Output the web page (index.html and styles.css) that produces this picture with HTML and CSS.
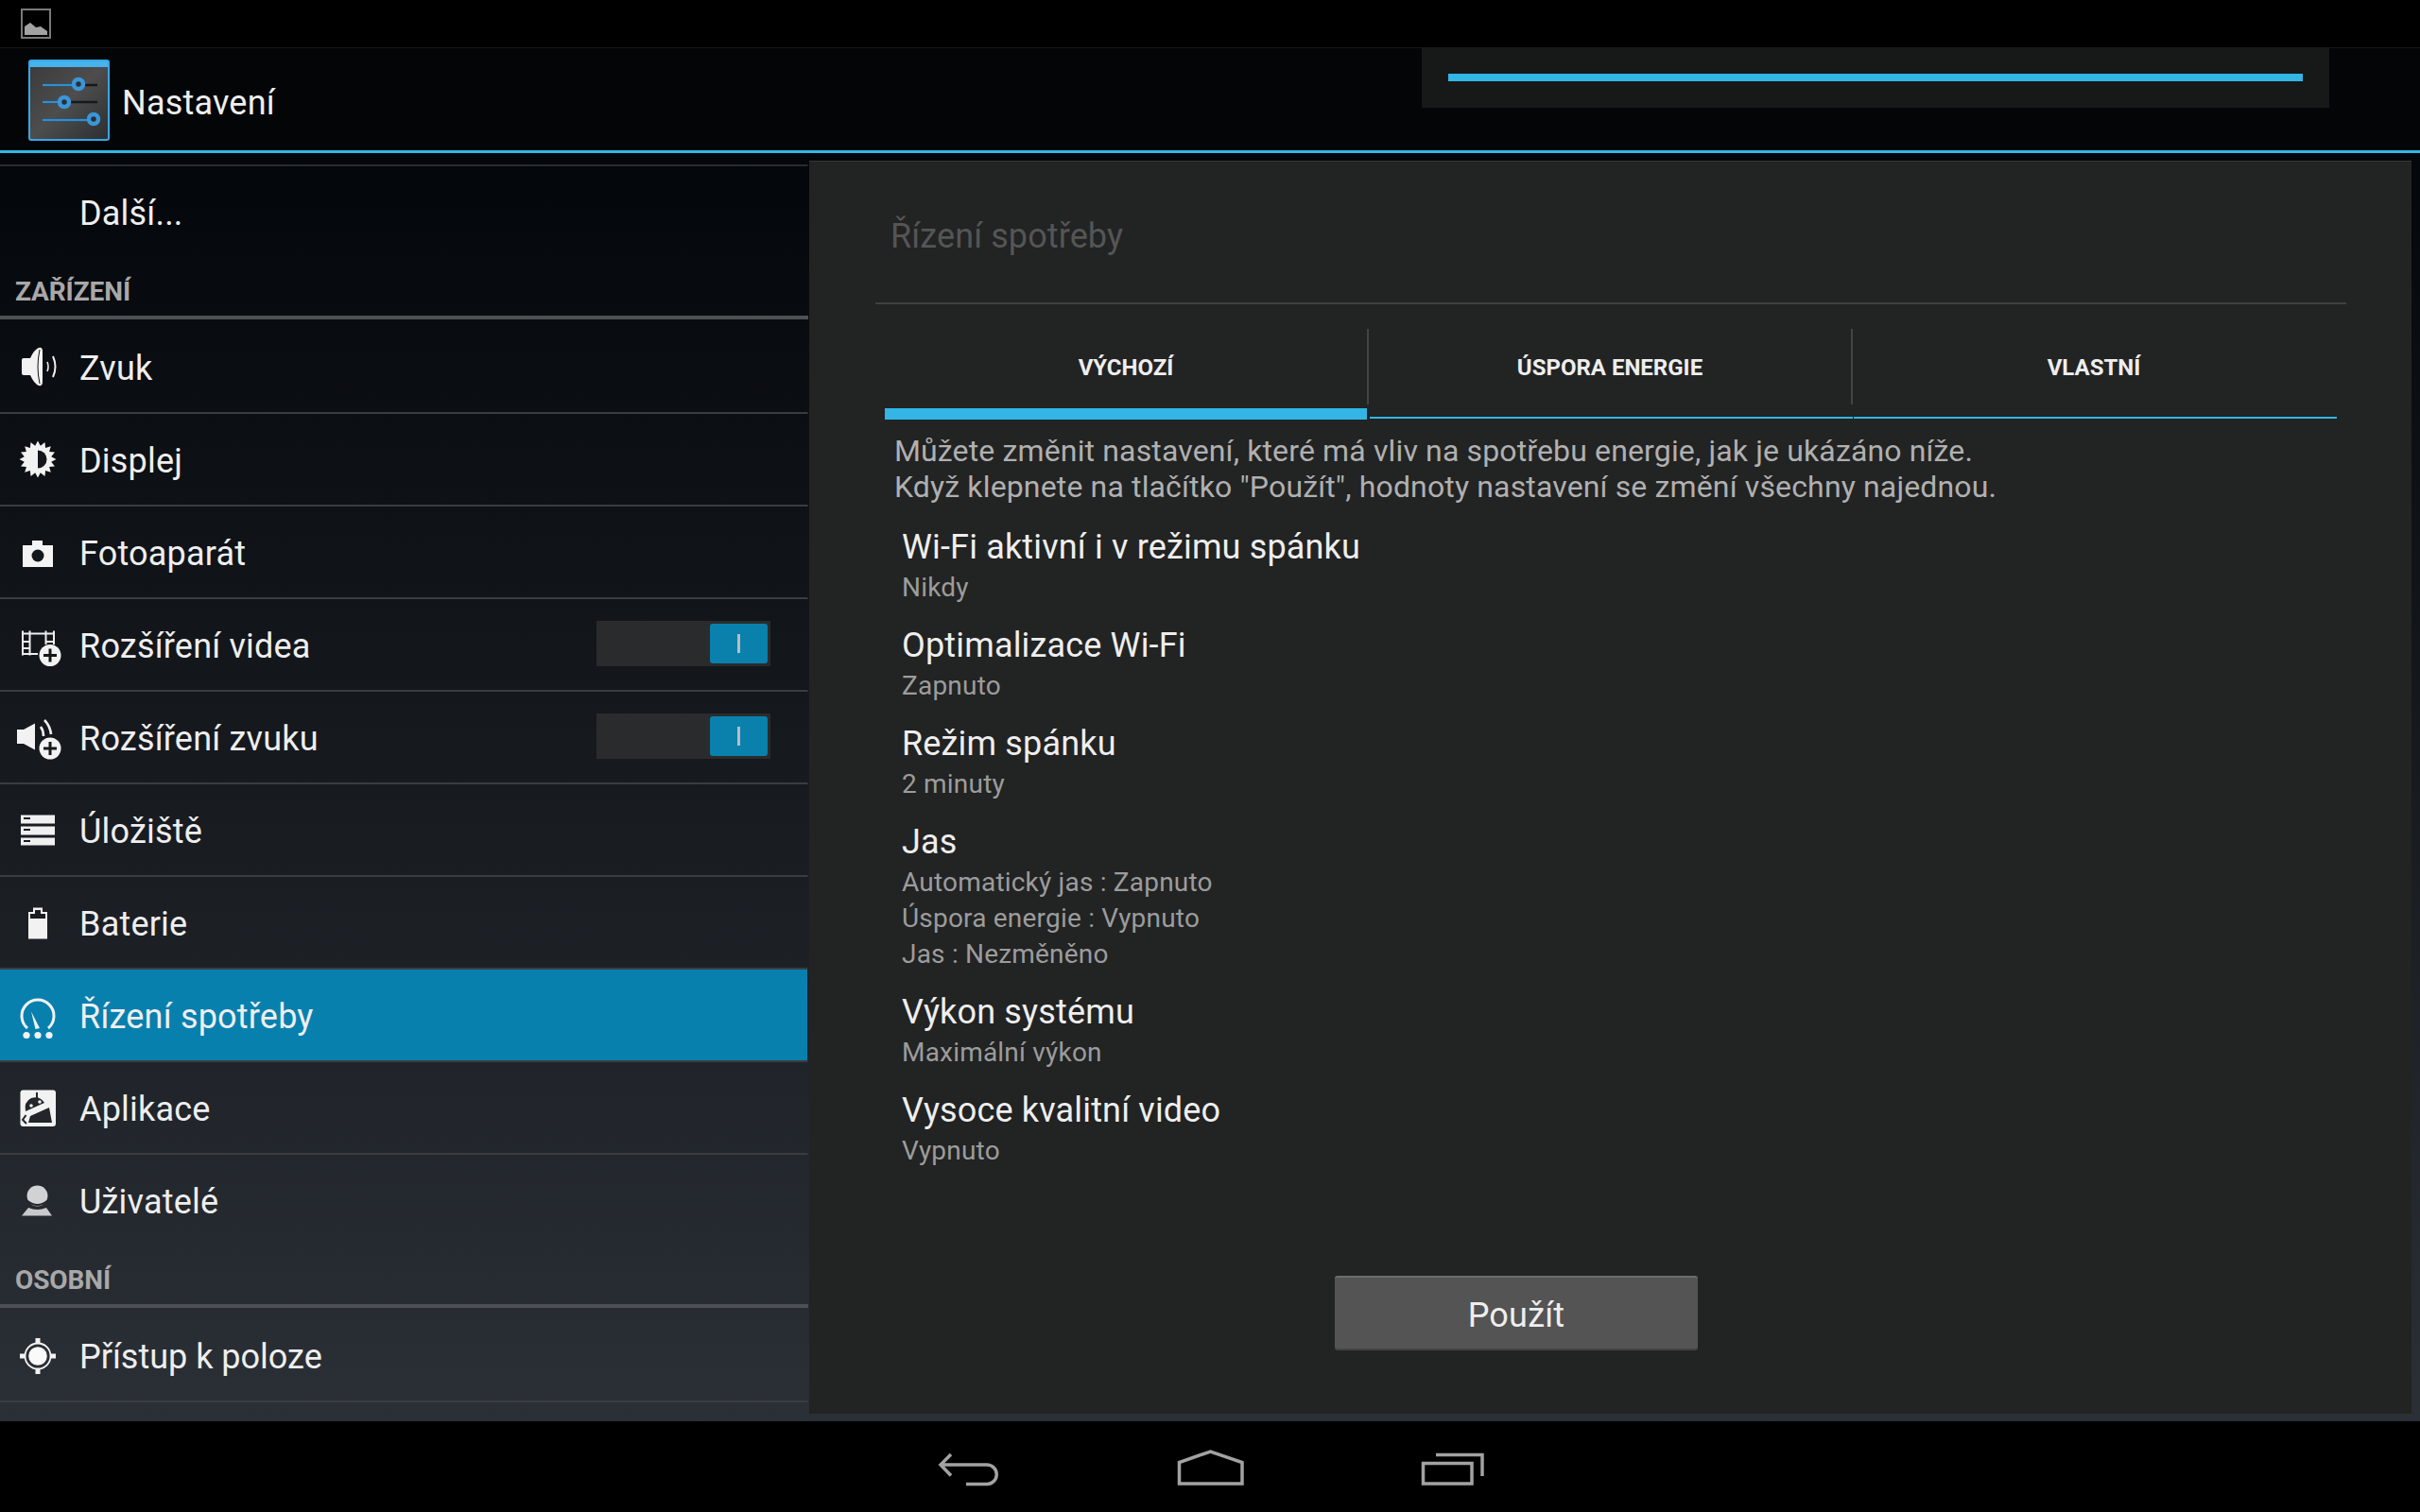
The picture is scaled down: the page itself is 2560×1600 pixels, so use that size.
FILE: index.html
```html
<!DOCTYPE html>
<html lang="cs">
<head>
<meta charset="utf-8">
<title>Nastavení</title>
<link rel="stylesheet" href="styles.css">
</head>
<body>
<div class="app">
  <header class="status">
    <svg class="status-icon" viewBox="0 0 32 32"><rect x="1" y="1" width="30" height="30" fill="none" stroke="#7a7a7a" stroke-width="2"/><path d="M4 28V19L10 15L16 20L21 19L28 24V28Z" fill="#a2a2a2"/></svg>
  </header>
  <div class="action">
    <svg class="app-icon" viewBox="0 0 86 86">
      <defs><linearGradient id="tile" x1="0" y1="0" x2="1" y2="1"><stop offset="0" stop-color="#3a3a3a"/><stop offset="0.5" stop-color="#4d4d4d"/><stop offset="1" stop-color="#2b2e31"/></linearGradient></defs>
      <rect x="1" y="1" width="84" height="84" rx="2" fill="url(#tile)" stroke="#37a7e6" stroke-width="2"/>
      <rect x="2" y="2" width="82" height="6" fill="#48b2ee"/>
      <path d="M15 27H73M15 45H73M15 64H73" stroke="#16181a" stroke-width="2.5"/>
      <path d="M15 27H53M15 45H38M15 64H69" stroke="#2f8fd0" stroke-width="2.5"/>
      <circle cx="53" cy="26" r="5" fill="#2b2e31" stroke="#3a96d8" stroke-width="4.5"/>
      <circle cx="38" cy="45" r="5" fill="#2b2e31" stroke="#3a96d8" stroke-width="4.5"/>
      <circle cx="69" cy="63" r="5" fill="#2b2e31" stroke="#3a96d8" stroke-width="4.5"/>
    </svg>
    <span class="app-title">Nastavení</span>
    <div class="progress-box"><div class="progress-bar"></div></div>
  </div>
  <main class="main">
    <nav class="list">
      <div class="row plain"><span class="label">Další...</span></div>
      <div class="section">ZAŘÍZENÍ</div>
      <div class="row first">
        <svg class="icon" viewBox="0 0 60 60"><path d="M15 21H22Q26 12 31 10Q35 9 35 14V46Q35 51 31 50Q26 48 22 39H15Q13 39 13 37V23Q13 21 15 21Z" fill="#f2f2f2"/><path d="M32 12Q28 30 32 48" fill="none" stroke="#14171a" stroke-width="1"/><path d="M40 25Q42 30 40 35" fill="none" stroke="#eee" stroke-width="1.6"/><path d="M46 19Q51 30 46 41" fill="none" stroke="#eee" stroke-width="2"/></svg>
        <span class="label">Zvuk</span>
      </div>
      <div class="row">
        <svg class="icon" viewBox="0 0 60 60"><polygon points="49.5,30 44.2,32.8 48,37.5 42.1,38.1 43.8,43.8 38.1,42.1 37.5,48 32.8,44.2 30,49.5 27.2,44.2 22.5,48 21.9,42.1 16.2,43.8 17.9,38.1 12,37.5 15.8,32.8 10.5,30 15.8,27.2 12,22.5 17.9,21.9 16.2,16.2 21.9,17.9 22.5,12 27.2,15.8 30,10.5 32.8,15.8 37.5,12 38.1,17.9 43.8,16.2 42.1,21.9 48,22.5 44.2,27.2" fill="#f2f2f2"/><path d="M30 20.5A9.5 9.5 0 0 1 30 39.5Z" fill="#13161a"/></svg>
        <span class="label">Displej</span>
      </div>
      <div class="row">
        <svg class="icon" viewBox="0 0 60 60"><path d="M14 23H24V18H35V23H46V46H14Z" fill="#f4f4f4"/><circle cx="30" cy="34" r="6.5" fill="#15181b"/></svg>
        <span class="label">Fotoaparát</span>
      </div>
      <div class="row">
        <svg class="icon" viewBox="0 0 60 60"><path d="M14 15.5V41.5M21.5 15.5V41.5M38.5 15.5V30M47 15.5V30M14 18.5H47M14 27H21.5M38.5 27H47M14 34H21.5M14 40H30" fill="none" stroke="#eee" stroke-width="2"/><circle cx="43" cy="41.5" r="11.5" fill="#f2f2f2"/><path d="M43 34.5V48.5M36 41.5H50" stroke="#15181b" stroke-width="3"/></svg>
        <span class="label">Rozšíření videa</span>
        <div class="toggle"><div class="thumb"><i class="tick"></i></div></div>
      </div>
      <div class="row">
        <svg class="icon" viewBox="0 0 60 60"><path d="M8 22H15L27 15.5V43.5L15 37H8Z" fill="#f2f2f2"/><path d="M33 19Q36 23 36 29M37 12Q43 18 44 27" fill="none" stroke="#eee" stroke-width="2.6"/><circle cx="43" cy="42" r="11.5" fill="#f2f2f2"/><path d="M43 35V49M36 42H50" stroke="#17191c" stroke-width="3"/></svg>
        <span class="label">Rozšíření zvuku</span>
        <div class="toggle"><div class="thumb"><i class="tick"></i></div></div>
      </div>
      <div class="row">
        <svg class="icon" viewBox="0 0 60 60"><path d="M12 14.5H48V23.5H12ZM12 26.5H48V35.5H12ZM12 38.5H48V46.5H12Z" fill="#f0f0f0"/><path d="M15 18H22M15 30H22M15 42H22" stroke="#1a1d20" stroke-width="2"/></svg>
        <span class="label">Úložiště</span>
      </div>
      <div class="row">
        <svg class="icon" viewBox="0 0 60 60"><path d="M25 14.5H35V19H40V47.5H20V19H25Z" fill="#f2f2f2"/><path d="M27 17H33V21H38V26H22V21H27Z" fill="#1b1e21"/></svg>
        <span class="label">Baterie</span>
      </div>
      <div class="row selected">
        <svg class="icon" viewBox="0 0 60 60"><path d="M19 44A17 17 0 1 1 41 44" fill="none" stroke="#f2f2f2" stroke-width="3"/><polygon points="23,26.5 27.5,45 32,44" fill="#f2f2f2"/><circle cx="18" cy="51.5" r="3.6" fill="#f2f2f2"/><circle cx="30" cy="51.5" r="3.6" fill="#f2f2f2"/><circle cx="42" cy="51.5" r="3.6" fill="#f2f2f2"/></svg>
        <span class="label">Řízení spotřeby</span>
      </div>
      <div class="row">
        <svg class="icon" viewBox="0 0 60 60"><rect x="11.5" y="11.5" width="37.5" height="38.5" rx="3" fill="#f2f2f2"/><path d="M17 34Q15 24 23 20Q32 17 37 25Z" fill="#22252a"/><path d="M29 14V20" stroke="#22252a" stroke-width="2"/><circle cx="23" cy="28" r="1.8" fill="#f2f2f2"/><circle cx="32" cy="24" r="1.8" fill="#f2f2f2"/><path d="M22 39L42 30L45 46H20Z" fill="#22252a"/><path d="M17.5 38L14 43L18 47" fill="none" stroke="#22252a" stroke-width="2"/></svg>
        <span class="label">Aplikace</span>
      </div>
      <div class="row last">
        <svg class="icon" viewBox="0 0 60 60"><circle cx="29.5" cy="25.5" r="11" fill="#d0d2d4"/><path d="M18 30Q29.5 40 41 30" fill="none" stroke="#23262a" stroke-width="2"/><path d="M13 46.5L20 38Q29.5 42 39 38L45 46.5Z" fill="#c6c8ca"/></svg>
        <span class="label">Uživatelé</span>
      </div>
      <div class="section">OSOBNÍ</div>
      <div class="row first">
        <svg class="icon" viewBox="0 0 60 60"><circle cx="30" cy="31" r="13.5" fill="none" stroke="#f2f2f2" stroke-width="1.8"/><circle cx="30" cy="31" r="9.8" fill="#fafafa"/><path d="M30 12V18M30 44V50M11 31H17M43 31H49" stroke="#f2f2f2" stroke-width="5"/></svg>
        <span class="label tight">Přístup k poloze</span>
      </div>
    </nav>
    <section class="panel">
      <div class="panel-title">Řízení spotřeby</div>
      <div class="tabs">
        <div class="tab active">VÝCHOZÍ</div>
        <div class="tab">ÚSPORA ENERGIE</div>
        <div class="tab">VLASTNÍ</div>
      </div>
      <p class="desc">Můžete změnit nastavení, které má vliv na spotřebu energie, jak je ukázáno níže.<br>Když klepnete na tlačítko "Použít", hodnoty nastavení se změní všechny najednou.</p>
      <div class="items">
        <div class="item"><div class="item-title">Wi-Fi aktivní i v režimu spánku</div><div class="item-sub">Nikdy</div></div>
        <div class="item"><div class="item-title">Optimalizace Wi-Fi</div><div class="item-sub">Zapnuto</div></div>
        <div class="item"><div class="item-title">Režim spánku</div><div class="item-sub">2 minuty</div></div>
        <div class="item"><div class="item-title">Jas</div><div class="item-sub">Automatický jas : Zapnuto</div><div class="item-sub">Úspora energie : Vypnuto</div><div class="item-sub">Jas : Nezměněno</div></div>
        <div class="item"><div class="item-title">Výkon systému</div><div class="item-sub">Maximální výkon</div></div>
        <div class="item"><div class="item-title">Vysoce kvalitní video</div><div class="item-sub">Vypnuto</div></div>
      </div>
      <button class="apply">Použít</button>
    </section>
  </main>
  <footer class="navbar">
    <svg class="nav-icon" viewBox="0 0 80 48"><path d="M21 9L10 20L21 31.5M10 20H59A10.25 10.25 0 0 1 59 40.5H37" fill="none" stroke="#a2a2a2" stroke-width="3.5"/></svg>
    <svg class="nav-icon" viewBox="0 0 80 48"><path d="M6.5 40V17.5L39.5 6L73 17.5V40Z" fill="none" stroke="#a2a2a2" stroke-width="3.5"/></svg>
    <svg class="nav-icon" viewBox="0 0 80 48"><path d="M22 9.5H71V32M8.5 18.5H60V40H8.5Z" fill="none" stroke="#a2a2a2" stroke-width="3.5"/></svg>
  </footer>
</div>
</body>
</html>
```
FILE: styles.css
```css
* { box-sizing: border-box; }
html, body { margin: 0; padding: 0; height: 100%; }
body { background: #000; font-family: Roboto, "Noto Sans", sans-serif; color: #eee; overflow: hidden; }
.app { width: 2560px; height: 1600px; display: flex; flex-direction: column; }
.status { height: 50px; background: #000; padding: 9px 0 0 22px; flex: none; }
.status-icon { width: 32px; height: 32px; display: block; }
.action { height: 112px; flex: none; display: flex; align-items: flex-start; background: #040506; border-top: 1px solid #141616; border-bottom: 3px solid #33b5e5; padding-left: 30px; }
.app-icon { width: 86px; height: 86px; margin-top: 12px; flex: none; }
.app-title { font-size: 36px; line-height: 42px; margin: 37px 0 0 13px; color: #eee; letter-spacing: 0.2px; }
.progress-box { margin: -1px 96px 0 auto; width: 960px; height: 64px; background: #171818; padding: 28px 28px 0; }
.progress-bar { height: 8px; background: #33b5e5; }
.main { flex: 1; min-height: 0; display: flex; background: linear-gradient(#03060a, #2b3036); }
.list { width: 855px; flex: none; padding-top: 12px; overflow: hidden; }
.row { height: 98px; display: flex; align-items: center; padding-left: 10px; border-bottom: 2px solid #3a3d40; border-right: 1px solid transparent; }
.row.first { height: 100px; padding-top: 2px; }
.row.plain { border-top: 2px solid #2a2b2c; border-bottom-color: transparent; padding-top: 3px; }
.row.last { height: 96px; border-bottom: 0; }
.row.selected { background: #0880ae; background-clip: padding-box; }
.icon { width: 60px; height: 60px; flex: none; margin-right: 14px; }
.plain .label { margin-left: 74px; }
.label { font-size: 36px; line-height: 44px; color: #eee; padding-top: 3px; letter-spacing: 0.2px; }
.label.tight { letter-spacing: 0; }
.section { height: 66px; padding: 19px 0 0 16px; font-size: 28px; line-height: 36px; font-weight: 700; color: #a8a8a8; border-bottom: 4px solid #4e5154; letter-spacing: -0.1px; }
.toggle { margin: -2px 39px 0 auto; width: 184px; height: 48px; background: #2a2b2c; display: flex; justify-content: flex-end; align-items: center; padding-right: 3px; }
.thumb { width: 61px; height: 42px; border-radius: 3px; background: #0a80ad; display: flex; align-items: center; justify-content: center; }
.tick { width: 3px; height: 20px; background: #bcbcbc; }
.panel { flex: 1; min-width: 0; margin: 8px 9px 8px 1px; background: #222323; border-top: 1px solid #383838; display: flex; flex-direction: column; align-items: flex-start; }
.panel-title { align-self: stretch; margin: 0 69px 0 70px; height: 151px; padding: 58px 0 0 16px; font-size: 36px; line-height: 42px; color: #555; border-bottom: 2px solid #3f4040; letter-spacing: 0.1px; }
.tabs { display: flex; margin: 26px 0 0 80px; width: 1536px; height: 96px; flex: none; }
.tab { flex: 1; font-size: 24px; font-weight: 700; line-height: 28px; text-align: center; color: #eee; padding: 27px 2px 0 0; position: relative; }
.tab::after { content: ""; position: absolute; left: 1px; right: 0; bottom: 1px; height: 2px; background: #33b5e5; }
.tab + .tab::before { content: ""; position: absolute; left: -2px; top: 0; width: 2px; height: 80px; background: #444; }
.tab.active::after { left: 0; right: 2px; bottom: 0; height: 12px; }
.desc { margin: 15px 0 0 90px; font-size: 32px; line-height: 37.5px; color: #b0b0b0; letter-spacing: 0.14px; }
.items { margin: 23px 0 0 98px; display: flex; flex-direction: column; gap: 20.5px; }
.item-title { font-size: 36px; line-height: 45.5px; color: #eee; letter-spacing: 0.16px; }
.item-sub { font-size: 28px; line-height: 38px; color: #9c9c9c; letter-spacing: 0.2px; }
.apply { margin: auto 0 67px 556px; width: 384px; height: 79px; flex: none; background: #545454; border: 0; border-top: 2px solid #6c6c6c; border-bottom: 2px solid #444; border-radius: 3px; font-family: Roboto, sans-serif; font-size: 36px; color: #eee; padding: 5px 0 0; letter-spacing: 0.2px; }
.navbar { height: 96px; flex: none; background: #000; display: flex; justify-content: center; align-items: flex-start; gap: 176px; padding: 26px 0 0 2px; }
.nav-icon { width: 80px; height: 48px; }
```
